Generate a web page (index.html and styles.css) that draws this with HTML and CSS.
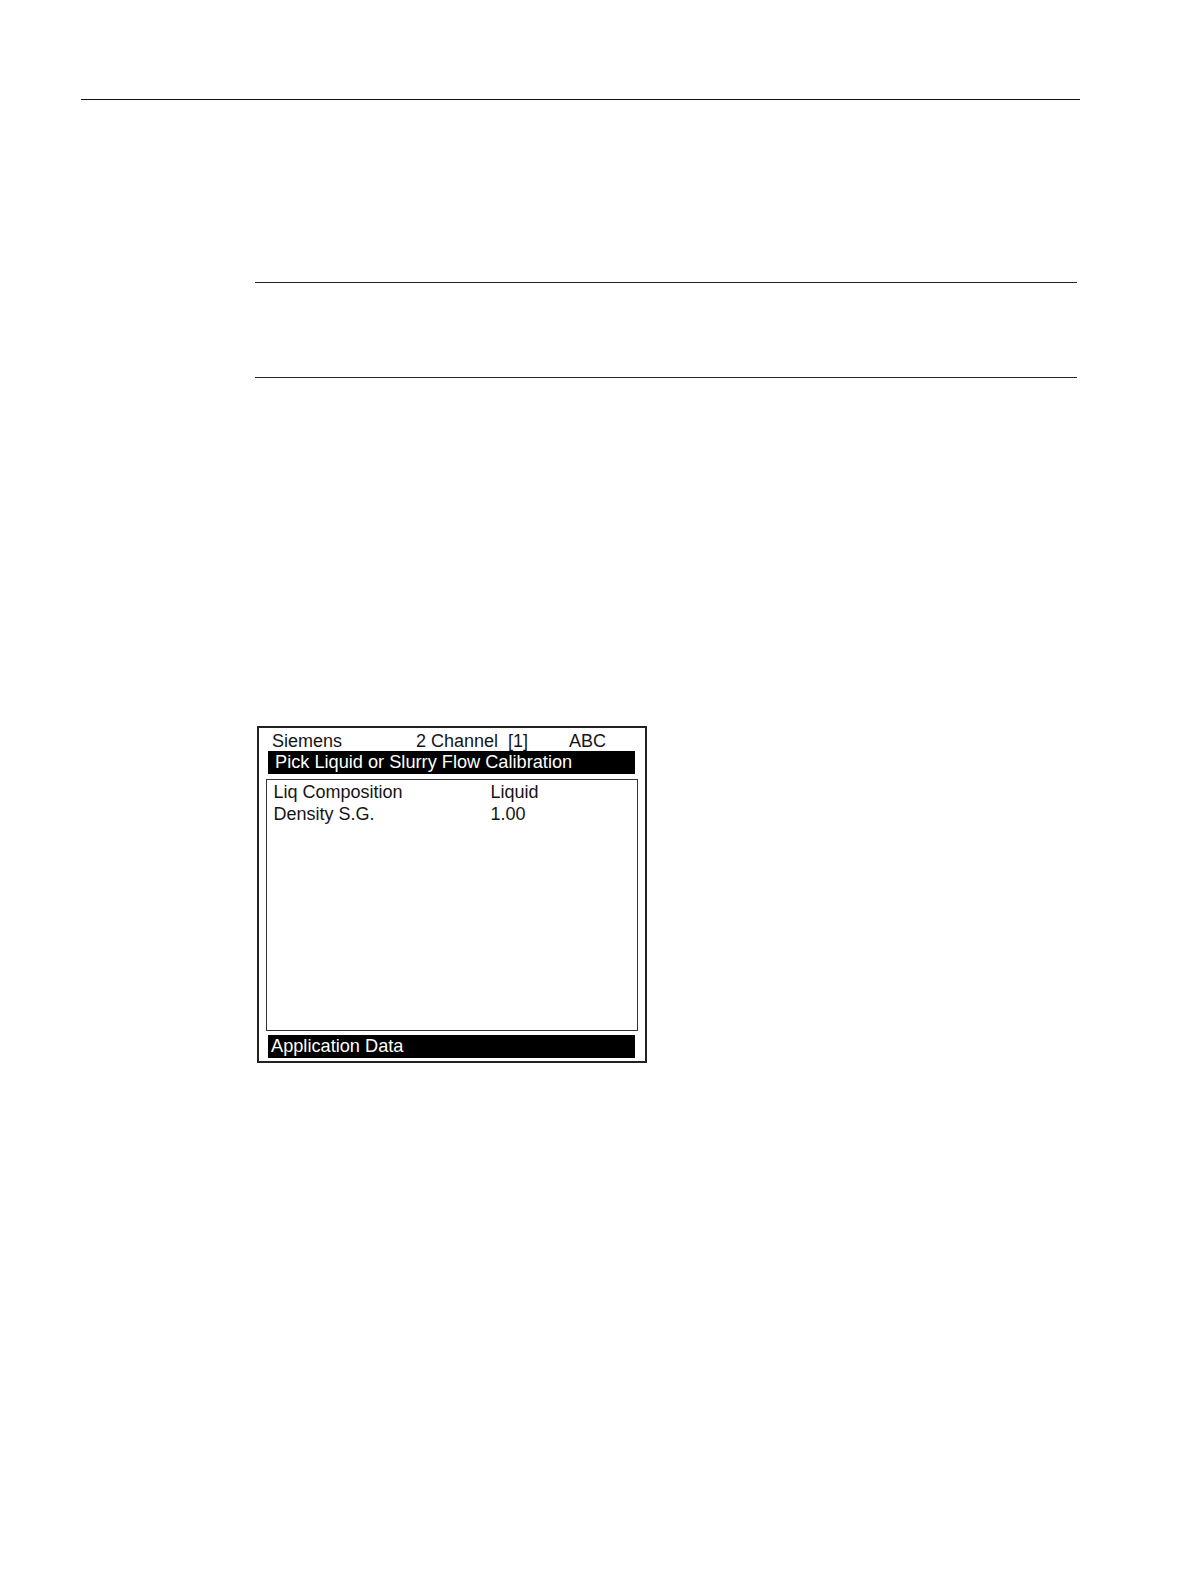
FILE: index.html
```html
<!DOCTYPE html>
<html>
<head>
<meta charset="utf-8">
<link rel="stylesheet" href="styles.css">
</head>
<body>
<div class="page">
  <div class="top-rule"></div>
  <div class="note">
    <div class="note-rule"></div>
    <div class="note-body"></div>
    <div class="note-rule"></div>
  </div>
  <div class="screen">
    <div class="status">
      <span class="st-brand">Siemens</span>
      <span class="st-chan">2 Channel&nbsp; [1]</span>
      <span class="st-mode">ABC</span>
    </div>
    <div class="bar title">Pick Liquid or Slurry Flow Calibration</div>
    <div class="panel">
      <div class="row"><span class="lbl">Liq Composition</span><span class="val">Liquid</span></div>
      <div class="row"><span class="lbl">Density S.G.</span><span class="val">1.00</span></div>
    </div>
    <div class="bar footer">Application Data</div>
  </div>
</div>
</body>
</html>
```
FILE: styles.css
```css
html, body {
  margin: 0;
  padding: 0;
  background: #fff;
}
.page {
  padding-top: 99px;
  font-family: "Liberation Sans", Arial, sans-serif;
  color: #151515;
}
.top-rule {
  margin: 0 0 0 81px;
  width: 999px;
  height: 0;
  border-top: 1.5px solid #111;
}
.note {
  margin: 182px 0 0 255px;
  width: 822px;
}
.note-rule {
  border-top: 1.5px solid #222;
}
.note-body {
  height: 94px;
}
.screen {
  margin: 348px 0 0 257px;
  width: 386px;
  height: 333px;
  border: 2px solid #222;
  box-sizing: content-box;
  display: flex;
  flex-direction: column;
}
.status {
  display: flex;
  height: 23px;
  align-items: flex-end;
  font-size: 18px;
  line-height: 20px;
  padding-left: 13px;
}
.st-brand { width: 144px; }
.st-chan { width: 153px; }
.bar {
  background: #000;
  color: #fff;
  font-size: 18.2px;
  line-height: 23px;
  height: 23px;
  margin: 0 10px 0 9px;
}
.title {
  padding-left: 7px;
}
.panel {
  margin: 5px 7px 0 7px;
  height: 252px;
  box-sizing: border-box;
  border: 1.5px solid #333;
  padding: 1px 0 0 6.5px;
  font-size: 18px;
  line-height: 22px;
}
.row {
  display: flex;
}
.lbl { width: 217px; }
.footer {
  margin-top: 4px;
  padding-left: 3px;
}
```
